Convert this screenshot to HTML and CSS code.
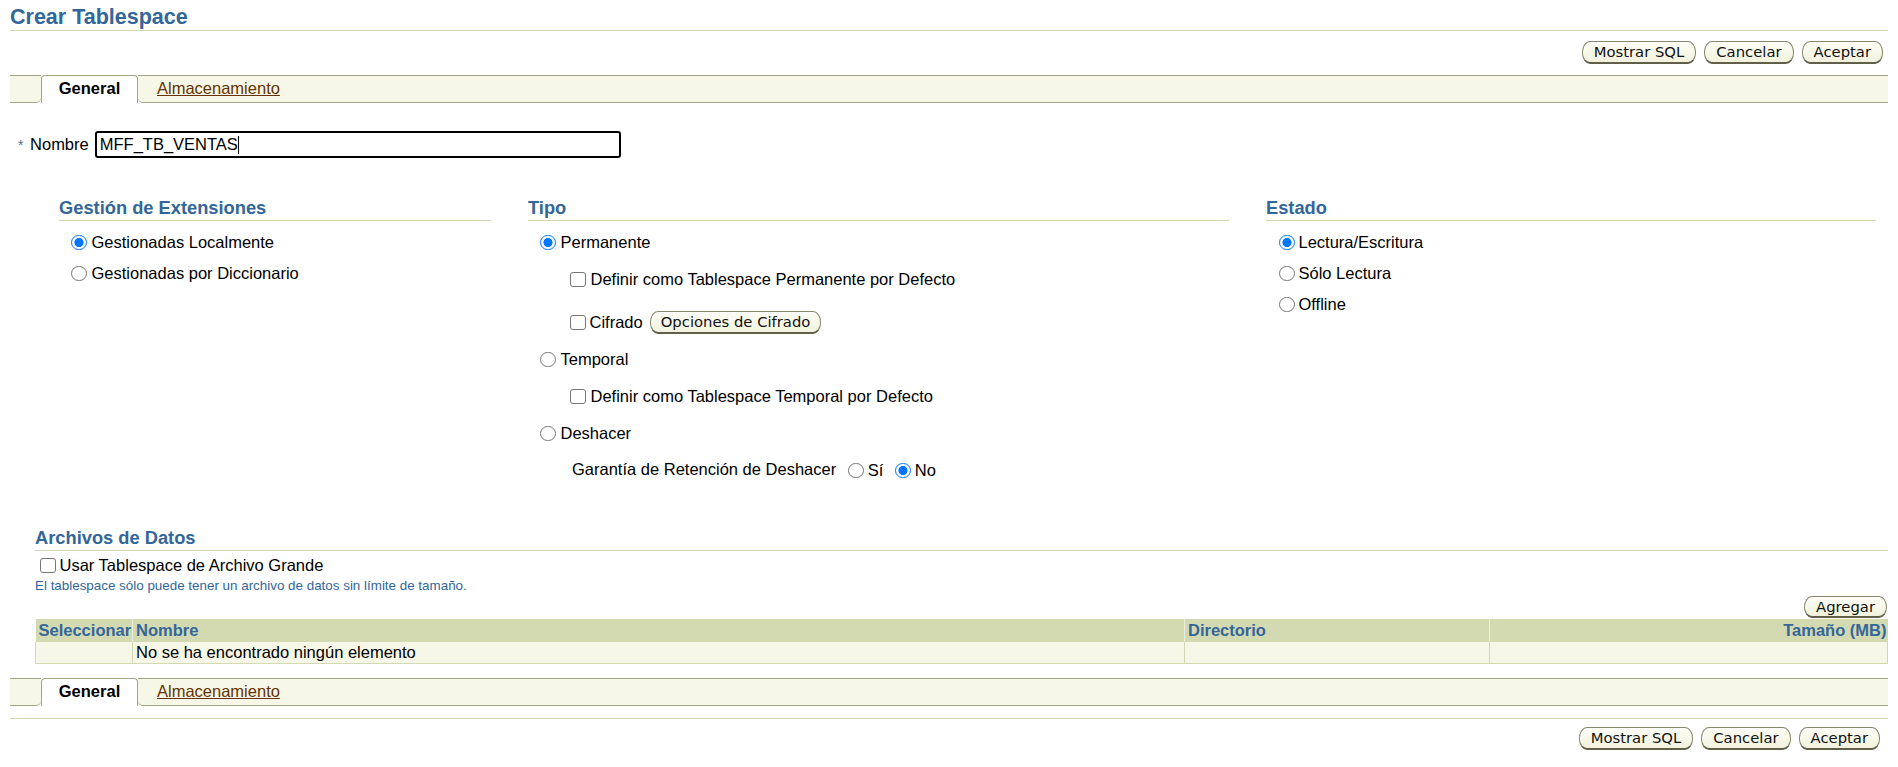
FILE: index.html
```html
<!DOCTYPE html>
<html lang="es">
<head>
<meta charset="utf-8">
<title>Crear Tablespace</title>
<link rel="stylesheet" href="styles.css">
</head>
<body>
<div class="page">
  <h1 class="title">Crear Tablespace</h1>

  <div class="btnrow btnrow-top">
    <button class="btn" type="button">Mostrar SQL</button>
    <button class="btn" type="button">Cancelar</button>
    <button class="btn" type="button">Aceptar</button>
  </div>

  <div class="tabbar tabbar-top">
    <div class="tab-lead"></div>
    <div class="tab-active">General</div>
    <div class="tab-rest"><a class="tablink" href="#">Almacenamiento</a></div>
  </div>

  <div class="namerow">
    <span class="nlabel"><span class="req">*</span> Nombre</span>
    <div class="textfield">MFF_TB_VENTAS<span class="caret"></span></div>
  </div>

  <div class="groups">
    <section class="group">
      <h2 class="ghead">Gestión de Extensiones</h2>
      <div class="opts opts-short">
        <label class="opt"><input type="radio" name="ext" checked>Gestionadas Localmente</label>
        <label class="opt"><input type="radio" name="ext">Gestionadas por Diccionario</label>
      </div>
    </section>

    <section class="group">
      <h2 class="ghead">Tipo</h2>
      <div class="opts opts-tall">
        <label class="opt"><input type="radio" name="tipo" checked>Permanente</label>
        <label class="opt opt-sub"><input type="checkbox">Definir como Tablespace Permanente por Defecto</label>
        <div class="opt opt-sub opt-cifrado">
          <label class="inl"><input type="checkbox">Cifrado</label>
          <button class="btn btn-cifrado" type="button">Opciones de Cifrado</button>
        </div>
        <label class="opt"><input type="radio" name="tipo">Temporal</label>
        <label class="opt opt-sub"><input type="checkbox">Definir como Tablespace Temporal por Defecto</label>
        <label class="opt"><input type="radio" name="tipo">Deshacer</label>
        <div class="opt opt-gar">
          <span class="gar-label">Garantía de Retención de Deshacer</span>
          <label class="inl"><input type="radio" name="gar">Sí</label>
          <label class="inl"><input type="radio" name="gar" checked>No</label>
        </div>
      </div>
    </section>

    <section class="group">
      <h2 class="ghead">Estado</h2>
      <div class="opts opts-short">
        <label class="opt opt-estado"><input type="radio" name="estado" checked>Lectura/Escritura</label>
        <label class="opt opt-estado"><input type="radio" name="estado">Sólo Lectura</label>
        <label class="opt opt-estado"><input type="radio" name="estado">Offline</label>
      </div>
    </section>
  </div>

  <section class="datafiles">
    <h2 class="ghead">Archivos de Datos</h2>
    <label class="bigfile"><input type="checkbox">Usar Tablespace de Archivo Grande</label>
    <div class="hint">El tablespace sólo puede tener un archivo de datos sin límite de tamaño.</div>
    <div class="addrow"><button class="btn" type="button">Agregar</button></div>
    <table class="dtable">
      <colgroup>
        <col class="c-sel"><col class="c-name"><col class="c-dir"><col class="c-size">
      </colgroup>
      <thead>
        <tr>
          <th>Seleccionar</th>
          <th>Nombre</th>
          <th>Directorio</th>
          <th class="num">Tamaño (MB)</th>
        </tr>
      </thead>
      <tbody>
        <tr>
          <td></td>
          <td>No se ha encontrado ningún elemento</td>
          <td></td>
          <td></td>
        </tr>
      </tbody>
    </table>
  </section>

  <div class="tabbar tabbar-bottom">
    <div class="tab-lead"></div>
    <div class="tab-active">General</div>
    <div class="tab-rest"><a class="tablink" href="#">Almacenamiento</a></div>
  </div>

  <div class="sepline"></div>

  <div class="btnrow btnrow-bottom">
    <button class="btn" type="button">Mostrar SQL</button>
    <button class="btn" type="button">Cancelar</button>
    <button class="btn" type="button">Aceptar</button>
  </div>
</div>
</body>
</html>
```

FILE: styles.css
```css
html, body {
  margin: 0;
  padding: 0;
  background: #ffffff;
}

body {
  font-family: "Liberation Sans", Arial, sans-serif;
  font-size: 16.5px;
  color: #000000;
}

.page {
  padding: 0 10px;
}

.title {
  margin: 4px 0 0;
  font-size: 21.5px;
  line-height: 26px;
  font-weight: bold;
  color: #336699;
  border-bottom: 1px solid #d2d5b3;
}

/* Buttons */
.btnrow {
  display: flex;
  justify-content: flex-end;
  gap: 8px;
}

.btnrow-top {
  margin-top: 10px;
  padding-right: 5px;
}

.btnrow-bottom {
  margin-top: 8px;
  padding-right: 8px;
}

.btn {
  box-sizing: border-box;
  height: 23px;
  padding: 0 11px;
  font-family: "DejaVu Sans", sans-serif;
  font-size: 14.8px;
  line-height: 20px;
  color: #111111;
  background: linear-gradient(#fdfdf6, #f2f2de);
  border: 1px solid #86866a;
  border-bottom: 2px solid #5f5f4a;
  border-radius: 8px / 11px;
  box-shadow: inset 1px 1px 0 #ffffff;
  cursor: pointer;
}

/* Tabs */
.tabbar {
  display: flex;
  height: 28px;
}

.tabbar-top {
  margin-top: 11px;
}

.tabbar-bottom {
  margin-top: 14px;
}

.tab-lead {
  box-sizing: border-box;
  width: 31px;
  background: #f7f7e7;
  border-top: 1px solid #a3a684;
  border-bottom: 1px solid #a3a684;
  border-bottom-right-radius: 5px;
}

.tab-active {
  box-sizing: border-box;
  width: 97px;
  background: #ffffff;
  border: 1px solid #a3a684;
  border-bottom: none;
  border-radius: 4px 4px 0 0;
  font-weight: bold;
  text-align: center;
  line-height: 24px;
}

.tab-rest {
  box-sizing: border-box;
  flex: 1;
  background: #f7f7e7;
  border-top: 1px solid #a3a684;
  border-bottom: 1px solid #a3a684;
  border-bottom-left-radius: 5px;
  padding-left: 19px;
  line-height: 24px;
}

.tablink {
  color: #663300;
  text-decoration: underline;
}

/* Name row */
.namerow {
  display: flex;
  align-items: center;
  margin-top: 28px;
  padding-left: 8px;
  height: 27px;
}

.nlabel {
  margin-right: 6px;
}

.req {
  font-size: 14px;
  color: #4a6f96;
  margin-right: 2px;
}

.textfield {
  box-sizing: border-box;
  width: 526px;
  height: 27px;
  padding-left: 3px;
  border: 2px solid #000000;
  border-radius: 3px;
  line-height: 23px;
  white-space: nowrap;
}

.caret {
  display: inline-block;
  width: 1px;
  height: 18px;
  background: #000000;
  vertical-align: -4px;
}

/* Option groups */
.groups {
  display: grid;
  grid-template-columns: 432px 701px 610px;
  column-gap: 37px;
  margin-top: 39px;
  padding-left: 49px;
  align-items: start;
}

.ghead {
  margin: 0;
  font-size: 18.3px;
  line-height: 22px;
  font-weight: bold;
  color: #336699;
  padding-bottom: 1px;
  border-bottom: 1px solid #d2d5b3;
}

.opts {
  display: flex;
  flex-direction: column;
}

.opts-short {
  padding-top: 6px;
}

.opts-tall {
  padding-top: 3px;
}

.opt {
  display: flex;
  align-items: center;
  gap: 5px;
  padding-left: 12px;
}

.opts-short .opt {
  height: 31px;
  padding-left: 12px;
}

.opts-short .opt-estado {
  padding-left: 13px;
  gap: 4px;
}

.opts-tall .opt {
  height: 37px;
}

.opts-tall .opt-sub {
  padding-left: 42px;
}

.opts-tall .opt-cifrado {
  margin-top: 6px;
  gap: 7px;
}

.opts-tall .opt-gar {
  padding-left: 44px;
  gap: 0;
}

.gar-label {
  margin-right: 12px;
  position: relative;
  top: -1px;
}

.opt-gar .inl {
  margin-right: 12px;
}

.inl {
  display: inline-flex;
  align-items: center;
  gap: 4px;
}

/* Native-looking controls, drawn at the reference size */
input[type="radio"],
input[type="checkbox"] {
  -webkit-appearance: none;
  appearance: none;
  box-sizing: border-box;
  width: 15.5px;
  height: 15.5px;
  margin: 0;
  flex: none;
  background: #ffffff;
  border: 1px solid #767676;
}

input[type="radio"] {
  border-radius: 50%;
}

input[type="radio"]:checked {
  border: 1.5px solid #0075ff;
  background: radial-gradient(circle, #0075ff 0 4.2px, #ffffff 4.9px);
}

input[type="checkbox"] {
  border-radius: 3px;
}

.btn-cifrado {
  padding: 0 10px;
}

/* Data files */
.datafiles {
  margin-top: 38px;
  padding-left: 25px;
}

.bigfile {
  display: flex;
  align-items: center;
  gap: 4px;
  height: 25px;
  margin-top: 2px;
  padding-left: 5px;
}

.hint {
  font-size: 13.4px;
  line-height: 15px;
  color: #336699;
}

.addrow {
  display: flex;
  justify-content: flex-end;
  margin-top: 3px;
  padding-right: 1px;
}

.addrow .btn {
  height: 22px;
  line-height: 19px;
}

.dtable {
  width: 100%;
  border-collapse: collapse;
  margin-top: 1px;
  table-layout: fixed;
}

.c-sel { width: 97px; }
.c-dir { width: 305px; }
.c-size { width: 398px; }

.dtable th {
  height: 23px;
  padding: 0 3px;
  background: #d3d9b1;
  color: #336699;
  font-weight: bold;
  text-align: left;
  line-height: 23px;
  border-left: 1px solid #eceedd;
  white-space: nowrap;
}

.dtable th:first-child {
  border-left: none;
}

.dtable th.num {
  text-align: right;
  padding-right: 1px;
}

.dtable td {
  height: 21px;
  padding: 0 3px;
  background: #f7f7e7;
  line-height: 21px;
  border: 1px solid #d3d9b1;
  border-top: none;
  white-space: nowrap;
}

.sepline {
  margin-top: 12px;
  border-top: 1px solid #d2d5b3;
}
```
